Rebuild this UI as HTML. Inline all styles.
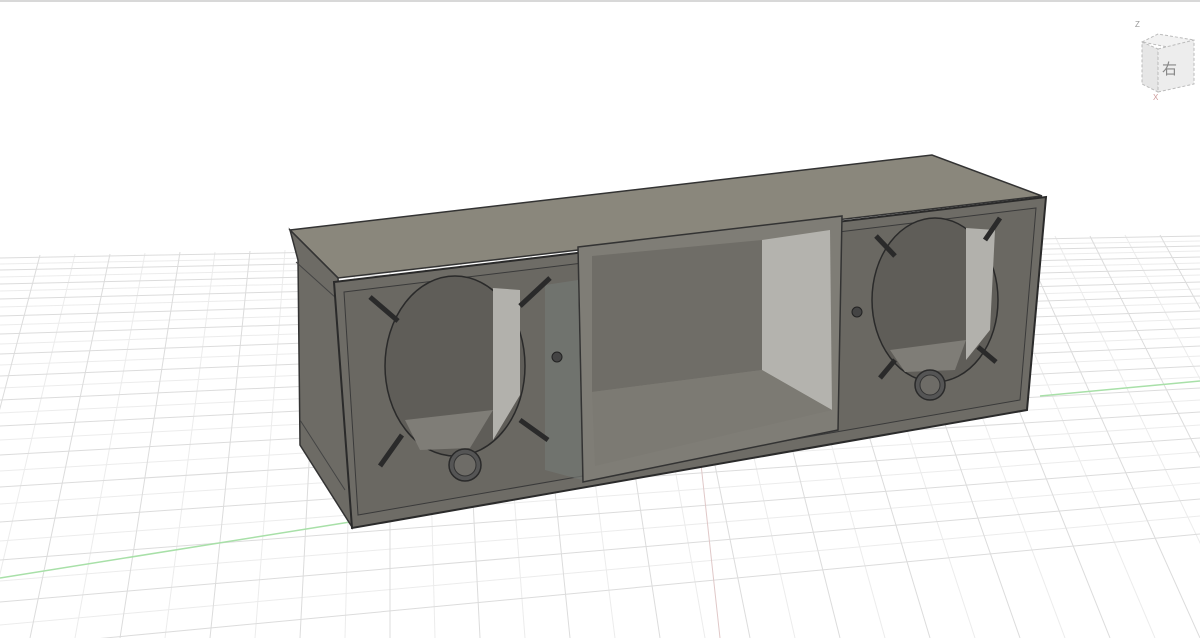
<!DOCTYPE html>
<html><head><style>
html,body{margin:0;padding:0;background:#fff;width:1200px;height:638px;overflow:hidden;font-family:"Liberation Sans","Noto Sans CJK SC",sans-serif}
</style></head><body>
<svg width="1200" height="638" viewBox="0 0 1200 638" xmlns="http://www.w3.org/2000/svg">
<rect width="1200" height="638" fill="#ffffff"/>
<line x1="0" y1="1" x2="1200" y2="1" stroke="#d8d8d8" stroke-width="2"/>
<g stroke="#ececec" stroke-width="1" fill="none">
<path d="M0 264 L1200 241"/><path d="M0 277 L1200 251"/><path d="M0 291 L1200 263"/><path d="M0 307 L1200 275"/>
<path d="M0 325 L1200 289"/><path d="M0 344 L1200 303"/><path d="M0 365 L1200 319"/><path d="M0 388 L1200 337"/>
<path d="M0 413 L1200 356"/><path d="M0 440 L1200 377"/><path d="M0 471 L1200 400"/><path d="M0 504 L1200 425"/>
<path d="M0 541 L1200 452"/><path d="M0 581 L1200 483"/><path d="M0 625 L1200 516"/>
<path d="M75 254 L-15 638"/><path d="M145 253 L75 638"/><path d="M215 252 L165 638"/><path d="M285 250 L255 638"/>
<path d="M355 249 L345 638"/><path d="M425 248 L435 638"/><path d="M495 246 L525 638"/><path d="M565 245 L615 638"/>
<path d="M635 243 L705 638"/><path d="M705 242 L795 638"/><path d="M775 241 L885 638"/><path d="M845 240 L975 638"/>
<path d="M915 238 L1065 638"/><path d="M985 237 L1155 638"/><path d="M1055 236 L1245 638"/><path d="M1125 235 L1335 638"/>
</g>
<g stroke="#dcdcdc" stroke-width="1" fill="none">
<path d="M0 258 L1200 236"/><path d="M0 270 L1200 246"/><path d="M0 284 L1200 257"/><path d="M0 299 L1200 269"/>
<path d="M0 316 L1200 282"/><path d="M0 334 L1200 296"/><path d="M0 354 L1200 311"/><path d="M0 376 L1200 328"/>
<path d="M0 400 L1200 346"/><path d="M0 426 L1200 366"/><path d="M0 455 L1200 388"/><path d="M0 487 L1200 412"/>
<path d="M0 522 L1200 438"/><path d="M0 560 L1200 467"/><path d="M0 602 L1200 499"/><path d="M0 648 L1200 534"/>
<path d="M40 255 L-60 638"/><path d="M110 254 L30 638"/><path d="M180 252 L120 638"/><path d="M250 251 L210 638"/>
<path d="M320 250 L300 638"/><path d="M390 248 L390 638"/><path d="M460 247 L480 638"/><path d="M530 246 L570 638"/>
<path d="M600 244 L660 638"/><path d="M670 243 L750 638"/><path d="M740 242 L840 638"/><path d="M810 240 L930 638"/>
<path d="M880 239 L1020 638"/><path d="M950 238 L1110 638"/><path d="M1020 237 L1200 638"/><path d="M1090 236 L1290 638"/><path d="M1160 235 L1380 638"/>
</g>
<path d="M0 578 L350 522" stroke="#a8e0a8" stroke-width="1.5"/>
<path d="M1040 396 L1200 381" stroke="#a8e0a8" stroke-width="1.5"/>
<path d="M700 455 L720 638" stroke="#e0c8c8" stroke-width="1"/>
<polygon points="290,230 932,155 1042,196 338,278" fill="#8a877c" stroke="#333" stroke-width="1.5"/>
<polygon points="290,230 338,278 352,527 300,445 298,260" fill="#6d6b65" stroke="#333" stroke-width="1.5"/>
<line x1="296" y1="262" x2="336" y2="298" stroke="#444"/>
<line x1="300" y1="420" x2="345" y2="490" stroke="#444"/>
<polygon points="334,282 1046,197 1027,410 352,528" fill="#6e6c66" stroke="#2a2a2a" stroke-width="2"/>
<polygon points="344,292 1036,208 1020,400 358,515" fill="#6a6862" stroke="#3a3a3a" stroke-width="1"/>
<polygon points="578,247 842,216 838,430 583,482" fill="#7f7d76" stroke="#333" stroke-width="1.5"/>
<polygon points="592,256 762,240 762,370 592,392" fill="#6f6d67"/>
<polygon points="762,240 830,230 832,410 762,370" fill="#b4b3ae"/>
<polygon points="592,392 762,370 832,410 595,466" fill="#7c7a73"/>
<polygon points="545,285 578,280 582,480 545,470" fill="#737774" opacity="0.7"/>
<ellipse cx="455" cy="366" rx="70" ry="90" fill="#5f5d58" stroke="#2a2a2a" stroke-width="1.5"/>
<polygon points="493,288 520,290 520,395 493,440" fill="#b2b1ac"/>
<polygon points="405,420 493,410 470,448 420,450" fill="#7f7d77"/>
<circle cx="465" cy="465" r="16" fill="#555" stroke="#2a2a2a" stroke-width="1.5"/>
<circle cx="465" cy="465" r="11" fill="#6e6c67" stroke="#333"/>
<circle cx="557" cy="357" r="5" fill="#444" stroke="#222"/>
<g stroke="#2a2a2a" stroke-width="5" stroke-linecap="butt"><line x1="370" y1="297" x2="398" y2="321"/><line x1="550" y1="278" x2="520" y2="306"/><line x1="402" y1="435" x2="380" y2="466"/><line x1="520" y1="420" x2="548" y2="440"/></g>
<ellipse cx="935" cy="300" rx="63" ry="82" fill="#5f5d58" stroke="#2a2a2a" stroke-width="1.5"/>
<polygon points="966,228 995,230 990,330 966,360" fill="#b2b1ac"/>
<polygon points="890,350 966,340 955,370 905,372" fill="#7f7d77"/>
<circle cx="930" cy="385" r="15" fill="#555" stroke="#2a2a2a" stroke-width="1.5"/>
<circle cx="930" cy="385" r="10" fill="#6e6c67" stroke="#333"/>
<circle cx="857" cy="312" r="5" fill="#444" stroke="#222"/>
<g stroke="#2a2a2a" stroke-width="5"><line x1="876" y1="236" x2="895" y2="256"/><line x1="1000" y1="218" x2="985" y2="240"/><line x1="880" y1="378" x2="895" y2="360"/><line x1="978" y1="347" x2="996" y2="362"/></g>
<g>
<polygon points="1142,42 1158,34 1194,40 1178,49" fill="#f2f2f2" stroke="#bbb" stroke-dasharray="3,2"/>
<polygon points="1142,42 1158,49 1158,92 1142,84" fill="#e6e6e6" stroke="#bbb" stroke-dasharray="3,2"/>
<polygon points="1158,49 1194,40 1194,84 1158,92" fill="#ededed" stroke="#bbb" stroke-dasharray="3,2"/>
<text x="1162" y="74" font-size="15" fill="#888">右</text>
<text x="1135" y="27" font-size="8" fill="#999">Z</text>
<text x="1153" y="100" font-size="8" fill="#c99">X</text>
</g>
</svg>
</body></html>
